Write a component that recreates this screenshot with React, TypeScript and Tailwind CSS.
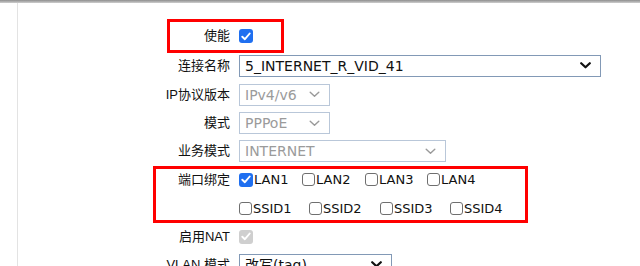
const label = 'font-["Liberation_Sans","Noto_Sans_CJK_SC",sans-serif] text-[13px] text-[#111]'
const ctrl = 'font-["DejaVu_Sans","Noto_Sans_CJK_SC",sans-serif]'

function Chevron({ dark }: { dark?: boolean }) {
  return (
    <svg width="11" height="7" viewBox="0 0 11 7" className="shrink-0">
      <path
        d="M1.2 1.2 L5.5 5.3 L9.8 1.2"
        fill="none"
        stroke={dark ? '#111' : '#9a9a9a'}
        strokeWidth={dark ? 2.2 : 1.4}
        strokeLinecap="round"
        strokeLinejoin="round"
      />
    </svg>
  )
}

function FakeSelect({
  value,
  width,
  disabled,
}: {
  value: string
  width: string
  disabled?: boolean
}) {
  return (
    <div
      className={`${width} h-[22px] flex items-center justify-between pl-[5px] pr-[9px] bg-white border ${
        disabled ? 'border-[#b9c7d9] text-[#9b9b9b]' : 'border-[#8299b6] text-[#111]'
      } ${ctrl} text-[14px] leading-none`}
    >
      <span>{value}</span>
      <Chevron dark={!disabled} />
    </div>
  )
}

function Check({ state }: { state: 'on' | 'off' | 'disabled' }) {
  if (state === 'off') {
    return <div className="w-[13px] h-[13px] rounded-[3px] border border-[#6f6f6f] bg-white shrink-0" />
  }
  return (
    <div
      className={`w-[14px] h-[14px] rounded-[3px] flex items-center justify-center shrink-0 ${
        state === 'on' ? 'bg-[#1f6ff0]' : 'bg-[#cfcfcf]'
      }`}
    >
      <svg width="10" height="9" viewBox="0 0 10 9">
        <path
          d="M1.3 4.7 L3.9 7.2 L8.7 1.5"
          fill="none"
          stroke="white"
          strokeWidth="1.9"
          strokeLinecap="round"
          strokeLinejoin="round"
        />
      </svg>
    </div>
  )
}

function Row({ h, name, children }: { h: string; name: string; children?: React.ReactNode }) {
  return (
    <div className={`flex items-center ${h}`}>
      <div className={`w-[212px] text-right ${label}`}>{name}</div>
      <div className="ml-[9px] flex items-center">{children}</div>
    </div>
  )
}

function Opt({ text, on, w }: { text: string; on?: boolean; w: string }) {
  return (
    <div className={`flex items-center ${w}`}>
      <Check state={on ? 'on' : 'off'} />
      <span className={`ml-[1px] ${ctrl} text-[13px] text-[#111]`}>{text}</span>
    </div>
  )
}

export default function App() {
  return (
    <div className="relative w-[640px] h-[266px] overflow-hidden bg-white">
      <div className="h-[3px] bg-gradient-to-b from-[#8e8e8e] to-[#cfcfcf]" />
      <div className="ml-[17px] h-full border-l border-[#e3e3e3] pt-[18px]">
        <Row h="h-[30px]" name="使能">
          <Check state="on" />
        </Row>
        <Row h="h-[29px]" name="连接名称">
          <FakeSelect value="5_INTERNET_R_VID_41" width="w-[362px]" />
        </Row>
        <Row h="h-[29px]" name="IP协议版本">
          <FakeSelect value="IPv4/v6" width="w-[91px]" disabled />
        </Row>
        <Row h="h-[28px]" name="模式">
          <FakeSelect value="PPPoE" width="w-[91px]" disabled />
        </Row>
        <Row h="h-[28px]" name="业务模式">
          <FakeSelect value="INTERNET" width="w-[207px]" disabled />
        </Row>
        <Row h="h-[29px]" name="端口绑定">
          <Opt text="LAN1" on w="w-[63px]" />
          <Opt text="LAN2" w="w-[63px]" />
          <Opt text="LAN3" w="w-[62px]" />
          <Opt text="LAN4" w="w-[63px]" />
        </Row>
        <Row h="h-[29px]" name="">
          <Opt text="SSID1" w="w-[70px]" />
          <Opt text="SSID2" w="w-[71px]" />
          <Opt text="SSID3" w="w-[70px]" />
          <Opt text="SSID4" w="w-[71px]" />
        </Row>
        <Row h="h-[27px]" name="启用NAT">
          <Check state="disabled" />
        </Row>
        <Row h="h-[29px]" name="VLAN 模式">
          <FakeSelect value="改写(tag)" width="w-[153px]" />
        </Row>
      </div>

      {/* annotation boxes */}
      <div className="absolute left-[167px] top-[19px] w-[117px] h-[34px] border-[3px] border-[#ff0000]" />
      <div className="absolute left-[153px] top-[166px] w-[375px] h-[57px] border-[3px] border-[#ff0000]" />
    </div>
  )
}
